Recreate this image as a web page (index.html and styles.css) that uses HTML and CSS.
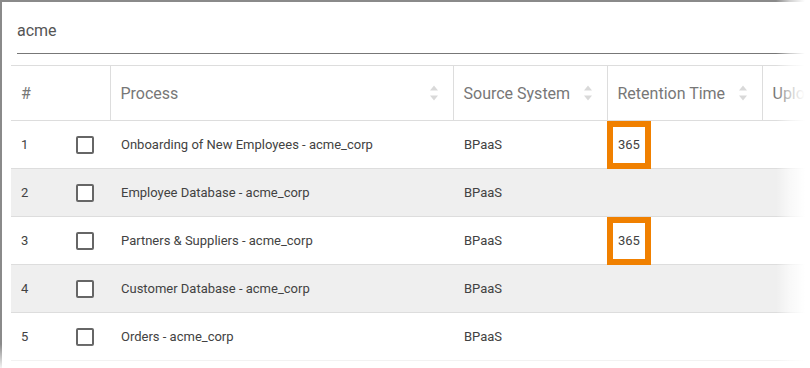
FILE: index.html
```html
<!DOCTYPE html>
<html lang="en">

<head>
    <meta charset="UTF-8">
    <meta name="viewport" content="width=device-width, initial-scale=1.0">
    <title>Processes</title>

    <link rel="stylesheet" href="styles.css">
</head>

<body>
    <div class="page">
        <div class="frame">

            <!-- search field -->
            <div class="search">
                <span class="query">acme</span>
            </div>

            <table class="grid">
                <colgroup>
                    <col class="c-num">
                    <col class="c-check">
                    <col class="c-process">
                    <col class="c-source">
                    <col class="c-retention">
                    <col class="c-upload">
                </colgroup>
                <thead>
                    <tr>
                        <th>#</th>
                        <th class="no-sep"></th>
                        <th>
                            <div class="th-in">
                                <span>Process</span>
                                <svg class="sort" width="10" height="16" viewBox="0 0 10 16">
                                    <path d="M1 5.5 L5 0.5 L9 5.5 Z" />
                                    <path d="M1 10.5 L5 15.5 L9 10.5 Z" />
                                </svg>
                            </div>
                        </th>
                        <th>
                            <div class="th-in">
                                <span>Source System</span>
                                <svg class="sort" width="10" height="16" viewBox="0 0 10 16">
                                    <path d="M1 5.5 L5 0.5 L9 5.5 Z" />
                                    <path d="M1 10.5 L5 15.5 L9 10.5 Z" />
                                </svg>
                            </div>
                        </th>
                        <th>
                            <div class="th-in">
                                <span>Retention Time</span>
                                <svg class="sort" width="10" height="16" viewBox="0 0 10 16">
                                    <path d="M1 5.5 L5 0.5 L9 5.5 Z" />
                                    <path d="M1 10.5 L5 15.5 L9 10.5 Z" />
                                </svg>
                            </div>
                        </th>
                        <th>
                            <div class="th-in">
                                <span>Upload</span>
                            </div>
                        </th>
                    </tr>
                </thead>
                <tbody>
                    <tr>
                        <td>1</td>
                        <td class="check"><span class="box"></span></td>
                        <td>Onboarding of New Employees - acme_corp</td>
                        <td>BPaaS</td>
                        <td class="marked">365<span class="mark"></span></td>
                        <td></td>
                    </tr>
                    <tr class="alt">
                        <td>2</td>
                        <td class="check"><span class="box"></span></td>
                        <td>Employee Database - acme_corp</td>
                        <td>BPaaS</td>
                        <td></td>
                        <td></td>
                    </tr>
                    <tr>
                        <td>3</td>
                        <td class="check"><span class="box"></span></td>
                        <td>Partners &amp; Suppliers - acme_corp</td>
                        <td>BPaaS</td>
                        <td class="marked">365<span class="mark"></span></td>
                        <td></td>
                    </tr>
                    <tr class="alt">
                        <td>4</td>
                        <td class="check"><span class="box"></span></td>
                        <td>Customer Database - acme_corp</td>
                        <td>BPaaS</td>
                        <td></td>
                        <td></td>
                    </tr>
                    <tr>
                        <td>5</td>
                        <td class="check"><span class="box"></span></td>
                        <td>Orders - acme_corp</td>
                        <td>BPaaS</td>
                        <td></td>
                        <td></td>
                    </tr>
                </tbody>
            </table>
        </div>

        <!-- the screenshot edges fade out -->
        <div class="fade-right"></div>
        <div class="fade-bottom"></div>
    </div>
</body>

</html>
```

FILE: styles.css
```css
* {
    box-sizing: border-box;
}

body {
    margin: 0;
    background-color: #fff;
    font-family: Roboto, "Liberation Sans", sans-serif;
}

.page {
    position: relative;
    width: 810px;
    height: 368px;
    overflow: hidden;
}

.frame {
    height: 100%;
    border-left: 2px solid #8a8a8a;
    border-top: 2px solid #8a8a8a;
}

.search {
    height: 52px;
    margin-left: 15px;
    padding-top: 19px;
    border-bottom: 1px solid #777;
}

.query {
    font-size: 16px;
    line-height: 19px;
    color: #555;
}

.grid {
    margin-left: 9px;
    margin-top: 11px;
    width: 901px;
    table-layout: fixed;
    border-collapse: collapse;
}

.c-num {
    width: 49px;
}

.c-check {
    width: 50px;
}

.c-process {
    width: 343px;
}

.c-source {
    width: 154px;
}

.c-retention {
    width: 155px;
}

.c-upload {
    width: 150px;
}

th {
    height: 55px;
    padding: 0 14px 0 10px;
    border-top: 1px solid #ddd;
    border-bottom: 1px solid #ddd;
    border-left: 1px solid #ddd;
    font-size: 16px;
    font-weight: 400;
    color: #777;
    text-align: left;
    white-space: nowrap;
}

th:first-child,
th.no-sep {
    border-left: none;
}

.th-in {
    display: flex;
    align-items: center;
    justify-content: space-between;
}

.sort {
    fill: #d9d9d9;
    flex-shrink: 0;
}

td {
    height: 48px;
    padding: 0 10px 0 11px;
    border-bottom: 1px solid #ddd;
    font-size: 13px;
    color: #424242;
    white-space: nowrap;
}

td:first-child {
    padding-left: 10px;
}

tr.alt td {
    background-color: #efefef;
}

td.check {
    padding: 0;
    text-align: center;
}

.box {
    display: inline-block;
    width: 18px;
    height: 18px;
    margin-top: 4px;
    margin-right: 1px;
    border: 2px solid #666;
    border-radius: 2px;
    background-color: #fff;
}

td.marked {
    position: relative;
}

.mark {
    position: absolute;
    left: 0;
    top: 0;
    bottom: -1px;
    width: 44px;
    border: 6px solid #f08000;
}

.fade-right {
    position: absolute;
    top: 0;
    right: 0;
    width: 34px;
    height: 100%;
    background: linear-gradient(to right, rgba(255, 255, 255, 0), rgba(255, 255, 255, .6) 40%, #fff 85%);
}

.fade-bottom {
    position: absolute;
    left: 0;
    bottom: 0;
    width: 100%;
    height: 24px;
    background: linear-gradient(to bottom, rgba(255, 255, 255, 0), rgba(255, 255, 255, .9));
}
```
